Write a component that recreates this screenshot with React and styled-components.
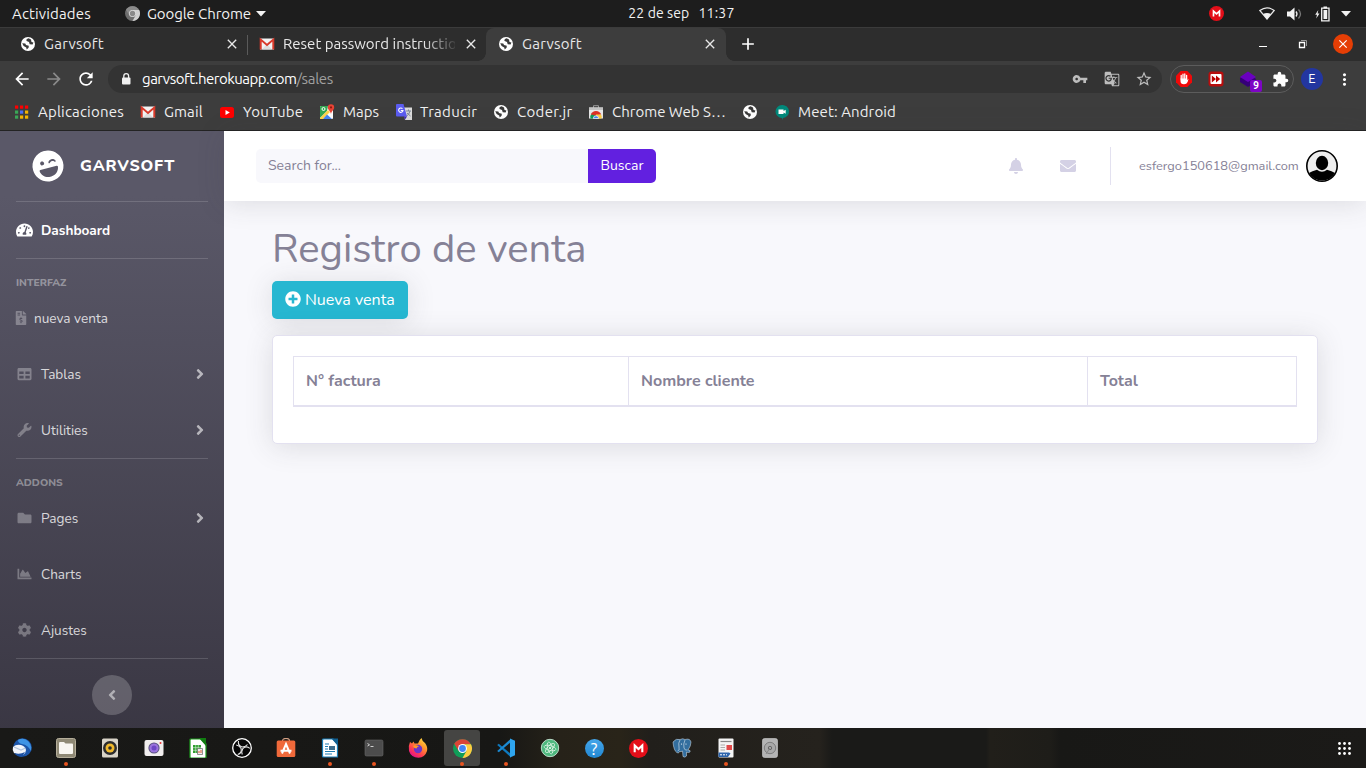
import React from 'react';
import styled, { createGlobalStyle, css } from 'styled-components';
import {
  FaLaughWink, FaTachometerAlt, FaFileInvoiceDollar, FaTable, FaWrench, FaFolder, FaChartArea,
  FaCog, FaAngleRight, FaAngleLeft, FaBell, FaEnvelope, FaPlusCircle,
} from 'react-icons/fa';
import {
  MdArrowBack, MdArrowForward, MdRefresh, MdVpnKey, MdGTranslate, MdStarBorder,
  MdExtension, MdMoreVert, MdAdd, MdClose,
} from 'react-icons/md';

const Global = createGlobalStyle`
  *, *::before, *::after { box-sizing: border-box; }
  body { margin: 0; background: #1d1d1d; overflow: hidden; }
  svg { display: block; flex-shrink: 0; }
`;

const systemFont = "Ubuntu, 'Noto Sans', sans-serif";
const pageFont = "Nunito, Lato, 'Noto Sans', sans-serif";

const Desktop = styled.div`
  width: 1366px;
  height: 768px;
  display: flex;
  flex-direction: column;
  font-family: ${systemFont};
  overflow: hidden;
`;

const Label = styled.span`
  letter-spacing: ${(p) => p.$track || 0}px;
  white-space: pre;
`;

/* ---------- system bar ---------- */

const SystemBar = styled.header`
  height: 27px;
  flex: none;
  display: grid;
  grid-template-columns: 1fr auto 1fr;
  align-items: center;
  padding: 0 15px 0 12px;
  background: #1d1d1d;
  color: #f2f2f2;
  font-size: 15px;
  line-height: 26px;
`;

const SystemLeft = styled.div`
  display: flex;
  align-items: center;
  svg:first-of-type { margin: 0 7px 0 34px; }
  svg:last-of-type { margin-left: 5px; }
`;

const Clock = styled.div`
  display: flex;
  gap: 9px;
  margin-top: -2px;
  font-size: 14px;
`;

const Tray = styled.div`
  display: flex;
  align-items: center;
  justify-content: flex-end;
  svg:first-child { margin-right: 35px; }
  svg:nth-child(2) { margin-right: 12px; }
  svg:nth-child(3) { margin-right: 13px; }
  svg:nth-child(4) { margin-right: 11px; }
`;

/* ---------- browser ---------- */

const TabStrip = styled.div`
  height: 34px;
  flex: none;
  display: flex;
  align-items: stretch;
  padding-left: 8px;
  background: #2d2d2d;
  border-top: 1px solid #3b3b3b;
  color: #e8e8e8;
  font-size: 15px;
`;

const Tab = styled.div`
  width: ${(p) => p.$width}px;
  display: flex;
  align-items: center;
  gap: 8px;
  padding: 0 7px 1px 12px;
  position: relative;
  ${(p) => p.$divided && css`
    background: linear-gradient(#5a5a5a, #5a5a5a) 0 7px / 1px 20px no-repeat;
  `}
  ${(p) => p.$active && css`
    padding-right: 8px;
    background: #3d3d3d;
    border-radius: 8px 8px 0 0;
    &::before, &::after {
      content: '';
      position: absolute;
      bottom: 0;
      width: 8px;
      height: 8px;
    }
    &::before { left: -8px; background: radial-gradient(circle at 0 0, transparent 7.5px, #3d3d3d 8px); }
    &::after { right: -8px; background: radial-gradient(circle at 100% 0, transparent 7.5px, #3d3d3d 8px); }
  `}
`;

const TabTitle = styled(Label)`
  flex: 1;
  min-width: 0;
  line-height: 22px;
  ${(p) => p.$fade && css`
    mask-image: linear-gradient(90deg, #000 82%, transparent 102%);
  `}
`;

const NewTab = styled.div`
  width: 44px;
  display: flex;
  align-items: center;
  justify-content: center;
  padding-bottom: 1px;
  color: #fff;
`;

const WindowControls = styled.div`
  margin-left: auto;
  display: flex;
  align-items: center;
  padding: 0 13px 1px 0;
  gap: 30px;
`;

const CloseWindow = styled.div`
  width: 20px;
  height: 20px;
  border-radius: 50%;
  background: #e53e05;
  color: #fff;
  display: grid;
  place-items: center;
  margin-left: -5px;
`;

const Toolbar = styled.div`
  height: 36px;
  flex: none;
  display: flex;
  align-items: center;
  padding-left: 6px;
  background: #3d3d3d;
  color: #fff;
`;

const IconSlot = styled.div`
  width: 32px;
  flex: none;
  display: flex;
  align-items: center;
  justify-content: center;
  color: ${(p) => p.$color || 'inherit'};
`;

const Omnibox = styled.div`
  width: 1054px;
  height: 28px;
  margin: 0 8px 0 6px;
  padding: 0 2px 0 10px;
  border-radius: 14px;
  background: #333;
  display: flex;
  align-items: center;
  font-size: 15px;
  color: #bdbdbd;
`;

const Url = styled.div`
  flex: 1;
  padding-left: 8px;
  line-height: 26px;
  color: #a0a0a0;
`;

const Host = styled(Label)`
  color: #fff;
`;

const Extensions = styled.div`
  width: 124px;
  height: 28px;
  border: 1px solid #5c5c5c;
  border-radius: 14px;
  display: flex;
  align-items: center;
  justify-content: center;
  margin-right: 2px;
`;

const BadgeHost = styled(IconSlot)`
  position: relative;
`;

const Badge = styled.span`
  position: absolute;
  left: 18px;
  top: 9px;
  width: 12px;
  height: 12px;
  border-radius: 2px;
  background: #7d05c4;
  color: #fff;
  font: bold 10px/12px ${systemFont};
  text-align: center;
`;

const Profile = styled.div`
  width: 22px;
  height: 22px;
  border-radius: 50%;
  background: #2336a0;
  color: #fff;
  font-size: 13px;
  line-height: 21px;
  text-align: center;
`;

const Bookmarks = styled.nav`
  height: 34px;
  flex: none;
  display: flex;
  align-items: center;
  padding: 0 14px 4px;
  background: #3d3d3d;
  border-bottom: 1px solid #232323;
  color: #f0f0f0;
  font-size: 15px;
  line-height: 22px;
`;

const Bookmark = styled.div`
  width: ${(p) => p.$width}px;
  display: flex;
  align-items: center;
  gap: 8px;
`;

/* ---------- page ---------- */

const Page = styled.div`
  flex: 1;
  min-height: 0;
  display: flex;
  background: #f8f8fc;
  font-family: ${pageFont};
  color: #858196;
`;

const Sidebar = styled.aside`
  width: 224px;
  flex: none;
  padding: 0 16px;
  background: linear-gradient(180deg, #5a5868 10%, #373440 100%);
  background-size: 100% 650px;
`;

const Brand = styled.div`
  height: 70px;
  display: flex;
  align-items: center;
  padding: 0 0 1px 16px;
  gap: 16px;
  color: #fff;
  font-size: 16px;
  font-weight: 800;
  svg { transform: rotate(-15deg); }
`;

const Divider = styled.hr`
  height: 1px;
  margin: 0;
  border: 0;
  background: rgba(255, 255, 255, 0.15);
`;

const Heading = styled.div`
  height: 31px;
  padding-top: 16px;
  color: rgba(255, 255, 255, 0.4);
  font-size: 10.4px;
  line-height: 16px;
  font-weight: 800;
`;

const NavItem = styled.div`
  height: 56px;
  display: flex;
  align-items: center;
  color: ${(p) => (p.$active ? '#fff' : 'rgba(255,255,255,.8)')};
  font-size: 13.6px;
  font-weight: ${(p) => (p.$active ? 700 : 400)};
  > svg:first-child {
    color: ${(p) => (p.$active ? '#fff' : 'rgba(255,255,255,.3)')};
    margin-right: ${(p) => (p.$tight ? 6 : 8)}px;
    width: ${(p) => (p.$tight ? 14 : 17)}px;
    margin-left: ${(p) => (p.$tight ? -2 : 0)}px;
  }
`;

const Caret = styled(FaAngleRight)`
  margin-left: auto;
  color: rgba(255, 255, 255, 0.6);
`;

const Collapse = styled.button`
  width: 40px;
  height: 40px;
  margin: 16px auto 0;
  border: 0;
  padding: 0;
  border-radius: 50%;
  background: rgba(255, 255, 255, 0.2);
  color: rgba(255, 255, 255, 0.5);
  display: flex;
  align-items: center;
  justify-content: center;
`;

const Main = styled.main`
  flex: 1;
  min-width: 0;
`;

const shadow = '0 2.4px 28px rgba(58, 59, 69, 0.15)';

const Topbar = styled.div`
  height: 70px;
  display: flex;
  align-items: center;
  padding: 0 28px 0 32px;
  background: #fff;
  box-shadow: ${shadow};
`;

const Search = styled.div`
  display: flex;
  margin-bottom: 1px;
  height: 34px;
  border-radius: 5px;
  overflow: hidden;
  line-height: 33px;
  font-size: 14px;
`;

const SearchField = styled.div`
  width: 332px;
  padding-left: 12px;
  background: #f8f8fc;
`;

const SearchButton = styled.div`
  width: 68px;
  background: #6220e0;
  color: #fff;
  text-align: center;
`;

const Alerts = styled.div`
  margin-left: auto;
  display: flex;
  align-items: center;
  gap: 36px;
  color: #d4d1e5;
`;

const Account = styled.div`
  height: 38px;
  width: 228px;
  margin-left: 34px;
  padding-left: 28px;
  border-left: 1px solid #e3e1f0;
  display: flex;
  align-items: center;
  justify-content: space-between;
  font-size: 12.8px;
`;

const Content = styled.section`
  padding: 24px 48px;
`;

const Title = styled.h1`
  margin: 0 0 8px;
  font-size: 40px;
  font-weight: 400;
  line-height: 48px;
`;

const NewSale = styled.button`
  display: flex;
  align-items: center;
  gap: 4px;
  width: 136px;
  height: 38px;
  padding: 0 0 0 13px;
  border: 0;
  border-radius: 5px;
  background: #27b7d1;
  color: #fff;
  font: 400 16px/24px ${pageFont};
  box-shadow: ${shadow};
  svg { margin-top: -2px; }
`;

const Card = styled.div`
  height: 109px;
  margin-top: 16px;
  padding: 20px;
  border: 1px solid #e3e1f0;
  border-radius: 5px;
  background: #fff;
  box-shadow: ${shadow};
`;

const Table = styled.div`
  display: grid;
  grid-template-columns: 334px 459px 1fr;
  border: 1px solid #e3e1f0;
  border-bottom-width: 2px;
  height: 51px;
`;

const HeaderCell = styled.div`
  padding-left: 12px;
  font-size: 16px;
  font-weight: 700;
  line-height: 48px;
  & + & { border-left: 1px solid #e3e1f0; }
`;

/* ---------- dock ---------- */

const Dock = styled.footer`
  height: 40px;
  flex: none;
  display: flex;
  align-items: center;
  padding: 0 8px 0 0;
  background: linear-gradient(90deg, #191917 0, #171715 500px, #262219 560px, #292419 620px, #211f1b 650px, #25221d 820px, #1a1a18 832px, #1a1a18 986px, #211f1a 990px, #1e1d19 1050px, #181816 1060px, #1b1a18 1366px);
`;

const DockSlot = styled.div`
  width: 44px;
  height: 40px;
  padding: 2px 4px;
`;

const DockItem = styled.div`
  height: 36px;
  border-radius: 3px;
  display: flex;
  align-items: center;
  justify-content: center;
  position: relative;
  background: ${(p) => (p.$focused ? '#454543' : 'transparent')};
  &::after {
    content: '';
    display: ${(p) => (p.$running ? 'block' : 'none')};
    position: absolute;
    bottom: 0;
    width: 4px;
    height: 4px;
    border-radius: 50%;
    background: #e95420;
  }
`;

const AppGrid = styled.div`
  margin-left: auto;
  width: 28px;
  display: flex;
  justify-content: center;
`;

/* ---------- drawings ---------- */

const Chrome = ({ size = 18, grey }) => {
  const [r, y, g, b] = grey ? ['#8b8b8b', '#d0d0d0', '#6e6e6e', '#8a8a8a'] : ['#db4437', '#ffcd40', '#0f9d58', '#4285f4'];
  return (
    <svg width={size} height={size} viewBox="0 0 24 24">
      <circle cx="12" cy="12" r="12" fill={g} />
      <path d="M12 12L1.6 6A12 12 0 0 1 22.4 6.5H12z" fill={r} />
      <path d="M12 6.5H22.7A12 12 0 0 1 12 24L17 15z" fill={y} />
      <path d="M1.6 6L7 15L12 6z" fill={r} />
      <circle cx="12" cy="12" r="5.6" fill={grey ? '#ddd' : '#fff'} />
      <circle cx="12" cy="12" r="4.3" fill={b} />
    </svg>
  );
};

const Globe = () => (
  <svg width="16" height="16" viewBox="0 0 16 16">
    <circle cx="8" cy="8" r="7" fill="#fff" />
    <path d="M8.6 2.3Q5.7 3 6.6 5L9 6.1L9.7 8.2L12.6 8.6L13.4 6.4L11.5 6L11 3.4z" fill="#3a3a3a" />
    <path d="M2.2 7.2L5.3 7.6L6 9L8.8 9.8L8.6 11.8L6.7 13.4L6.2 11.4L3.6 10.1z" fill="#3a3a3a" />
  </svg>
);

const Lock = () => (
  <svg width="16" height="16" viewBox="0 0 16 16">
    <rect x="4" y="6.5" width="8.500" height="7" rx="1" fill="#f0f0f0" />
    <path d="M5.800 7V5Q5.800 2.700 8.200 2.700Q10.600 2.700 10.600 5V7" fill="none" stroke="#f0f0f0" strokeWidth="1.300" />
  </svg>
);

const Mega = ({ size }) => (
  <svg width={size} height={size} viewBox="0 0 20 20">
    <circle cx="10" cy="10" r="10" fill="#e30e19" />
    <path d="M6 14V6.8L10 10.6L14 6.8V14" fill="none" stroke="#fff" strokeWidth="2.2" />
  </svg>
);

const Down = () => <svg width="10" height="6" viewBox="0 0 10 6"><path d="M0 0H10L5 5.5z" fill="#f2f2f2" /></svg>;

const Wifi = () => (
  <svg width="16" height="14" viewBox="0 0 16 14">
    <path d="M.8 3.5Q8-1.8 15.2 3.5L8 12z" fill="none" stroke="#e8e8e8" strokeWidth="1.2" />
    <path d="M4 7Q8 5.2 12 7L8 12.6z" fill="#f2f2f2" />
  </svg>
);

const Volume = () => (
  <svg width="15" height="14" viewBox="0 0 15 14">
    <path d="M0 4.5H3L7.5.5V13.5L3 9.5H0z" fill="#f2f2f2" />
    <path d="M9 4.5Q11 7 9 9.5" fill="none" stroke="#eee" strokeWidth="1.3" />
    <path d="M11.5 2.5Q15.5 7 11.5 11.5" fill="none" stroke="#777" strokeWidth="1.3" />
  </svg>
);

const Battery = () => (
  <svg width="15" height="16" viewBox="0 0 15 16">
    <path d="M3.3 4L.2 8.7H2L1.2 12.5L4.5 7.5H2.6z" fill="#f2f2f2" />
    <path d="M6.7 2.200H14V14.800H6.700z" fill="none" stroke="#f2f2f2" strokeWidth="1.3" />
    <path d="M8.5 4H12.200V13H8.500zM8.500 .5H12V2.500H8.500z" fill="#f2f2f2" />
  </svg>
);

const GmailIcon = () => (
  <svg width="16" height="16" viewBox="0 0 16 16">
    <path d="M1 2.5H15V13.5H1z" fill="#f3f3f3" />
    <path d="M3 13.5L8 8L13 13.5z" fill="#ddd" />
    <path d="M1.7 13.5V3.6L8 9L14.3 3.6V13.5" fill="none" stroke="#d93a2b" strokeWidth="2" />
  </svg>
);

const GridColours = () => (
  <svg width="16" height="16" viewBox="0 0 16 16">
    {['#f00', '#f00', '#f00', '#3aa757', '#4c6ef5', '#f5b400', '#3aa757', '#f5b400', '#f5b400'].map((fill, i) => (
      <rect key={i} x={1 + (i % 3) * 5} y={1.5 + Math.floor(i / 3) * 5} width="3.2" height="3.2" fill={fill} />
    ))}
  </svg>
);

const YouTube = () => (
  <svg width="16" height="16" viewBox="0 0 16 16">
    <rect x="1" y="3" width="14" height="11" rx="2.5" fill="#f00" />
    <path d="M6.5 6V11L10.8 8.5z" fill="#fff" />
  </svg>
);

const Maps = () => (
  <svg width="16" height="16" viewBox="0 0 16 16">
    <rect x="1" y="2" width="13" height="13" rx="1" fill="#fff" />
    <path d="M1 3Q1 2 2 2H9L8 7L1 14z" fill="#34a853" />
    <path d="M1 14L9 6L11 8L4 15H1z" fill="#ffd54a" />
    <path d="M4 15L8 10.5L13 15z" fill="#4285f4" />
    <circle cx="4.5" cy="5" r="1.5" fill="none" stroke="#fff" />
    <path d="M12 .3A3.2 3.2 0 0 1 15.2 3.5C15.2 6 12.5 7 12 10C11.5 7 8.8 6 8.8 3.5A3.2 3.2 0 0 1 12 .3z" fill="#ea4335" />
    <circle cx="12" cy="3.4" r="1.1" fill="#8e1d12" />
  </svg>
);

const Translate = () => (
  <svg width="16" height="16" viewBox="0 0 16 16">
    <path d="M7 3.5H16V16H9z" fill="#dcdcdc" />
    <path d="M10 7H15M12.5 5.5V7M14 7Q13 11 10.5 12M11 9L14.5 12" fill="none" stroke="#7b8796" />
    <path d="M0 1Q0 0 1 0H7.5L11 12.5H1Q0 12.5 0 11.5z" fill="#5b5cf0" />
    <path d="M8 12.5H11L9 15.7z" fill="#3b27b5" />
    <path d="M6.5 4.7A2.2 2.2 0 1 0 7 6.5H4.8" fill="none" stroke="#fff" strokeWidth="1.1" />
  </svg>
);

const WebStore = () => (
  <svg width="16" height="16" viewBox="0 0 16 16">
    <path d="M5.5 4V1.7H10.5V4" fill="none" stroke="#9a9a9a" />
    <path d="M1 3.5H15V14.5H1z" fill="#e8e8e8" />
    <path d="M1 3.5H15V6H1z" fill="#c4c4c4" />
    <path d="M2.5 14.5A5.8 5.8 0 0 1 4.2 9L8 11V14.5z" fill="#0f9d58" />
    <path d="M2.8 10.5A5.6 5.6 0 0 1 13.200 10.5L8 11.500z" fill="#db3226" />
    <path d="M8 10.500H13A5 5 0 0 1 13.5 14.5H8z" fill="#ffcd40" />
    <path d="M5.3 14.5A2.7 2.7 0 0 1 10.7 14.5z" fill="#4285f4" stroke="#fff" strokeWidth=".7" />
  </svg>
);

const Meet = () => (
  <svg width="16" height="16" viewBox="0 0 16 16">
    <path d="M8 1A6.5 6.5 0 0 1 9 14L8 16V14A6.5 6.5 0 0 1 8 1z" fill="#00897b" />
    <path d="M4.5 5.5H9.5V7L11.7 5.7V9.8L9.5 8.5V10H4.5z" fill="#fff" />
  </svg>
);

const StopHand = () => (
  <svg width="16" height="16" viewBox="0 0 16 16">
    <path d="M4.7 0H11.3L16 4.7V11.3L11.3 16H4.7L0 11.3V4.7z" fill="#f00909" />
    <path d="M5.2 8V4.5M7 8V3.2M8.8 8V3M10.6 8V4.3" stroke="#fff" strokeWidth="1.3" strokeLinecap="round" />
    <path d="M4.5 7.5H11.2V9L12.6 7.8L11.600 11Q10.700 13.3 8 13.3Q4.500 13.3 4.500 10z" fill="#fff" />
  </svg>
);

const FastForward = () => (
  <svg width="16" height="16" viewBox="0 0 16 16">
    <rect x=".5" y=".5" width="15" height="15" rx="3" fill="#b80d0d" />
    <rect x="2.5" y="3" width="11" height="10" rx="1" fill="#fff" />
    <path d="M3.8 4.5L8 8L3.8 11.5zM8 4.5L12.2 8L8 11.5z" fill="#b00" />
  </svg>
);

const Layers = () => (
  <svg width="16" height="16" viewBox="0 0 16 16">
    <path d="M0 7L8 3L16 8V11L8 16L0 11z" fill="#360079" />
    <path d="M0 6L8 .5L16 6L8 11z" fill="#6a00c0" />
  </svg>
);

const Avatar = () => (
  <svg width="32" height="32" viewBox="0 0 32 32">
    <circle cx="16" cy="16" r="15.2" fill="#eee" stroke="#000" strokeWidth="1.6" />
    <ellipse cx="16" cy="13" rx="6.2" ry="7.2" />
    <path d="M3 23Q6 21 11 19.8Q16 23.5 21 19.8Q26 21 29 23A15 15 0 0 1 3 23z" />
  </svg>
);

const Restore = () => (
  <svg width="10" height="10" viewBox="0 0 10 10" fill="none">
    <path d="M3 1.5H8.5V7" stroke="#999" />
    <path d="M1.5 3.5H6.5V8.5H1.5z" stroke="#fff" strokeWidth="1.3" />
  </svg>
);

const Minimise = () => <svg width="10" height="10" viewBox="0 0 10 10"><path d="M1 7H9V8H1z" fill="#fff" /></svg>;

const Art = ({ children }) => <svg width="20" height="20" viewBox="0 0 20 20">{children}</svg>;

const Thunderbird = () => (
  <Art>
    <circle cx="10.5" cy="9.5" r="9.3" fill="#1c55a8" />
    <path d="M6 2Q11-1 16 3Q20 7 19 13Q16 7 10 6Q6 5 6 2z" fill="#3f94e4" />
    <path d="M1 9Q4 6 9 7Q13 8 14 12Q14 15 11 17Q6 17 2 15Q0 12 1 9z" fill="#f2f5fa" />
    <path d="M2 9L9 12L13.500 10" fill="none" stroke="#b3c5dc" strokeWidth="1.2" />
    <path d="M2 15Q8 17 13 14L10 19Q5 19 2 15z" fill="#1b4fa0" />
  </Art>
);

const Files = () => (
  <Art>
    <rect x=".5" y=".5" width="19" height="19" rx="2" fill="#8f8975" stroke="#b5ae9a" />
    <path d="M3 5Q3 4 4 4H8L9.5 5.5H16Q17 5.5 17 6.5V15Q17 16 16 16H4Q3 16 3 15z" fill="#f8f6f1" />
  </Art>
);

const Rhythmbox = () => (
  <Art>
    <rect x="2" y=".5" width="16" height="19" rx="1.5" fill="#d9d4c8" />
    <circle cx="10" cy="10" r="7" fill="#2c2c2c" />
    <circle cx="10" cy="10" r="4.5" fill="#f0b92c" />
    <circle cx="10" cy="10" r="1.8" fill="#2c2c2c" />
  </Art>
);

const Camera = () => (
  <Art>
    <rect x=".5" y="2" width="19" height="16" rx="2" fill="#f1eeee" />
    <circle cx="10" cy="10" r="5.6" fill="#5a5380" />
    <circle cx="10" cy="10" r="4.6" fill="#9a73dd" />
    <circle cx="10" cy="10" r="2.5" fill="#6d46c4" />
    <circle cx="16.5" cy="5" r="1" fill="#e33" />
  </Art>
);

const Calc = () => (
  <Art>
    <path d="M3 1H13L18 6V19Q18 20 17 20H3Q2 20 2 19V2Q2 1 3 1z" fill="#fff" stroke="#1d9b1d" strokeWidth="1.2" />
    <path d="M11 0H18V8z" fill="#107c10" />
    <path d="M5 7H13V15H5z" fill="#2f9e2f" />
    <path d="M5 9.7H13M5 12.3H13M7.7 7V15M10.3 7V15" stroke="#d8f0d8" strokeWidth=".6" />
    <path d="M9.5 10.5H14.5V16.5H9.5z" fill="#eee" stroke="#666" strokeWidth=".7" />
    <path d="M11 15V13M13 15V12" stroke="#e0592a" />
  </Art>
);

const Obs = () => (
  <Art>
    <circle cx="10" cy="10" r="9.3" fill="#060606" stroke="#fff" strokeWidth="1.3" />
    <g fill="none" stroke="#e8e8e8" strokeWidth="1.1">
      <path d="M6.5 3Q5.500 7.500 10 9Q13.500 9 15.500 6.500" />
      <path d="M6.5 3Q5.500 7.500 10 9Q13.500 9 15.500 6.500" transform="rotate(120 10 10)" />
      <path d="M6.5 3Q5.500 7.500 10 9Q13.500 9 15.500 6.500" transform="rotate(240 10 10)" />
    </g>
  </Art>
);

const Software = () => (
  <Art>
    <path d="M6.5 3Q6.5 .5 10 .5Q13.5 .5 13.5 3" fill="none" stroke="#d5a184" strokeWidth="1.2" />
    <rect x=".7" y="2.5" width="18.6" height="16.5" rx="1.5" fill="#f0693a" />
    <path d="M6 15.5L10 6L14 15.5M4.5 12.7H15.5" fill="none" stroke="#fff" strokeWidth="2" />
  </Art>
);

const Writer = () => (
  <Art>
    <path d="M3.5 1H13L17.5 6V19H3.5Q2.5 19 2.5 18V2Q2.5 1 3.5 1z" fill="#fff" stroke="#1a7fb8" strokeWidth="1.2" />
    <path d="M11.5 .4H18V8z" fill="#0f5f91" />
    <path d="M5 6H9M5 8.5H8M5 11H8M5 13.5H15M5 16H12" stroke="#1d7db3" strokeWidth="1.2" />
    <path d="M9 8H15V12H9z" fill="#3d6d8d" />
  </Art>
);

const Terminal = () => (
  <Art>
    <rect x="1" y="2" width="18" height="16" rx="1.5" fill="#4c4c4c" stroke="#6a6a6a" strokeWidth=".6" />
    <path d="M3.500 5.500L5.500 6.800L3.500 8M6.500 8.500H9.500" fill="none" stroke="#ddd" strokeWidth=".9" />
  </Art>
);

const Firefox = () => (
  <Art>
    <defs>
      <linearGradient id="fox" x1="1" y1="0" x2=".3" y2="1">
        <stop offset="0" stopColor="#fff04a" />
        <stop offset=".4" stopColor="#ff9a2c" />
        <stop offset=".75" stopColor="#ff3b50" />
        <stop offset="1" stopColor="#e3108c" />
      </linearGradient>
    </defs>
    <path d="M2 4L4 5.5L5.5 3.5L6.5 5.5H10Q11 2 13.5 0Q14 3 17 5Q20 9 19 13Q17 19.5 10.5 19.7Q3 19.5 1 13Q0 8 2 4z" fill="url(#fox)" />
    <circle cx="10" cy="11" r="4.2" fill="#6a35c8" />
    <path d="M5 8Q8 6.5 11 8.5Q9 8.5 8.5 10.5Q6 10.5 5 8z" fill="#ff9b22" />
  </Art>
);

const Code = () => (
  <Art>
    <path d="M1.2 7L2.8 5.8L15 16V19.5z" fill="#0e7ac0" />
    <path d="M1.2 13L2.8 14.2L15 4V.7z" fill="#1b8ad3" />
    <path d="M14 .5L19 2.8V17.2L14 19.5z" fill="#2fa6f0" />
  </Art>
);

const AtomApp = () => (
  <Art>
    <circle cx="10" cy="10" r="8.7" fill="#4db87e" stroke="#b9dcc8" />
    <g fill="none" stroke="#def3e6" strokeWidth=".8">
      <ellipse cx="10" cy="10" rx="6" ry="2.4" transform="rotate(15 10 10)" />
      <ellipse cx="10" cy="10" rx="6" ry="2.4" transform="rotate(75 10 10)" />
      <ellipse cx="10" cy="10" rx="6" ry="2.4" transform="rotate(135 10 10)" />
    </g>
    <circle cx="10" cy="10" r="1" fill="#fff" />
  </Art>
);

const Help = styled.span`
  width: 19px;
  height: 19px;
  border-radius: 50%;
  background: linear-gradient(#45a6ea, #2187d2);
  color: #fff;
  font-size: 17px;
  line-height: 19px;
  text-align: center;
`;

const Elephant = () => (
  <Art>
    <path d="M1 4Q4 0 8 1.5Q11 0 13 1.5Q18 0 19 4Q19 8 16 12Q19 12 18 14Q16 15 14.5 14V18Q13 20 11 18.5L10.5 13Q9 14 7.5 13.5L6.5 15Q3 15 1.5 8z" fill="#336e9e" stroke="#dbe7f0" strokeWidth=".5" />
    <path d="M8 2Q6 5 7 9Q8 13 5.5 13M13 2Q11 6 12 10Q13 13 15.5 12" fill="none" stroke="#dbe7f0" strokeWidth=".6" />
    <circle cx="9.5" cy="6" r=".6" fill="#fff" />
    <circle cx="14" cy="6" r=".6" fill="#fff" />
  </Art>
);

const Reader = () => (
  <Art>
    <rect x="2.5" y=".5" width="15" height="19" rx="1" fill="#f4f4f4" />
    <path d="M4.5 3.5H15.5" stroke="#888" strokeWidth="1.2" />
    <path d="M4.5 7H9M4.5 9.5H9M4.5 12H9" stroke="#999" strokeWidth=".8" />
    <path d="M10.5 7H16V12H10.500z" fill="#e04848" />
    <path d="M2.5 14.5H13L14.500 15.5L12 19H2.5z" fill="#2e65ac" />
    <path d="M4 16.8H11" stroke="#fff" strokeDasharray="2 1" />
  </Art>
);

const Disk = () => (
  <Art>
    <rect x="2.5" y=".5" width="15" height="19" rx="2" fill="#b4b4b4" stroke="#d0d0d0" strokeWidth=".6" />
    <circle cx="10" cy="10" r="5.7" fill="#a9a9a9" stroke="#777" strokeWidth=".9" />
    <circle cx="10" cy="10" r="1.7" fill="none" stroke="#666" />
    <path d="M10 10L6 16" stroke="#888" />
  </Art>
);

const Dots = () => (
  <svg width="13" height="13" viewBox="0 0 13 13" fill="#fff">
    {[0, 1, 2, 3, 4, 5, 6, 7, 8].map((i) => (
      <circle key={i} cx={1.5 + (i % 3) * 5} cy={1.5 + Math.floor(i / 3) * 5} r="1.4" />
    ))}
  </svg>
);

const bookmarks = [
  { icon: <GridColours />, name: 'Aplicaciones', width: 126, track: 0.2 },
  { icon: <GmailIcon />, name: 'Gmail', width: 79, track: 0.1 },
  { icon: <YouTube />, name: 'YouTube', width: 100, track: 0.2 },
  { icon: <Maps />, name: 'Maps', width: 77, track: 0 },
  { icon: <Translate />, name: 'Traducir', width: 97, track: 0.3 },
  { icon: <Globe />, name: 'Coder.jr', width: 95, track: 0.3 },
  { icon: <WebStore />, name: 'Chrome Web S…', width: 154, track: 0 },
  { icon: <Globe />, width: 32 },
  { icon: <Meet />, name: 'Meet: Android', width: 130, track: 0.1 },
];

const dock = [
  { icon: <Thunderbird /> }, { icon: <Files />, running: true }, { icon: <Rhythmbox /> }, { icon: <Camera /> },
  { icon: <Calc /> }, { icon: <Obs /> }, { icon: <Software /> }, { icon: <Writer />, running: true },
  { icon: <Terminal />, running: true }, { icon: <Firefox /> }, { icon: <Chrome size={19} />, running: true, focused: true },
  { icon: <Code />, running: true }, { icon: <AtomApp /> }, { icon: <Help>?</Help> },
  { icon: <Mega size={19} /> }, { icon: <Elephant /> }, { icon: <Reader />, running: true }, { icon: <Disk /> },
];

const Entry = ({ icon: Icon, size = 14, name, caret, active, tight }) => (
  <NavItem $active={active} $tight={tight}>
    <Icon size={size} />
    <Label>{name}</Label>
    {caret && <Caret size={16} />}
  </NavItem>
);

export default function App() {
  return (
    <Desktop>
      <Global />
      <SystemBar>
        <SystemLeft>
          <Label $track={0.15}>Actividades</Label>
          <Chrome size={15} grey />
          <Label $track={-0.08}>Google Chrome</Label>
          <Down />
        </SystemLeft>
        <Clock>
          <Label $track={0.1}>22 de sep</Label>
          <Label $track={0.25}>11:37</Label>
        </Clock>
        <Tray><Mega size={15} /><Wifi /><Volume /><Battery /><Down /></Tray>
      </SystemBar>

      <TabStrip>
        <Tab $width={239}>
          <Globe />
          <TabTitle $track={0.25}>Garvsoft</TabTitle>
          <MdClose size={16} />
        </Tab>
        <Tab $width={239} $divided>
          <GmailIcon />
          <TabTitle $fade>Reset password instructio</TabTitle>
          <MdClose size={16} />
        </Tab>
        <Tab $width={240} $active>
          <Globe />
          <TabTitle $track={0.25}>Garvsoft</TabTitle>
          <MdClose size={16} />
        </Tab>
        <NewTab><MdAdd size={20} /></NewTab>
        <WindowControls>
          <Minimise />
          <Restore />
          <CloseWindow><MdClose size={14} /></CloseWindow>
        </WindowControls>
      </TabStrip>

      <Toolbar>
        <IconSlot><MdArrowBack size={20} /></IconSlot>
        <IconSlot $color="#8a8a8a"><MdArrowForward size={20} /></IconSlot>
        <IconSlot><MdRefresh size={20} /></IconSlot>
        <Omnibox>
          <Lock />
          <Url>
            <Host $track={-0.5}>garvsoft.herokuapp.com</Host>
            <Label $track={-0.3}>/sales</Label>
          </Url>
          <IconSlot><MdVpnKey size={16} /></IconSlot>
          <IconSlot><MdGTranslate size={16} /></IconSlot>
          <IconSlot><MdStarBorder size={18} /></IconSlot>
        </Omnibox>
        <Extensions>
          <IconSlot><StopHand /></IconSlot>
          <IconSlot><FastForward /></IconSlot>
          <BadgeHost><Layers /><Badge>9</Badge></BadgeHost>
          <IconSlot><MdExtension size={17} /></IconSlot>
        </Extensions>
        <IconSlot><Profile>E</Profile></IconSlot>
        <IconSlot><MdMoreVert size={19} /></IconSlot>
      </Toolbar>

      <Bookmarks>
        {bookmarks.map((b, i) => (
          <Bookmark key={i} $width={b.width}>
            {b.icon}
            {b.name && <Label $track={b.track}>{b.name}</Label>}
          </Bookmark>
        ))}
      </Bookmarks>

      <Page>
        <Sidebar>
          <Brand>
            <FaLaughWink size={32} />
            <Label $track={0.8}>GARVSOFT</Label>
          </Brand>
          <Divider />
          <Entry icon={FaTachometerAlt} size={16} name="Dashboard" active />
          <Divider />
          <Heading>INTERFAZ</Heading>
          <Entry icon={FaFileInvoiceDollar} name="nueva venta" tight />
          <Entry icon={FaTable} name="Tablas" caret />
          <Entry icon={FaWrench} name="Utilities" caret />
          <Divider />
          <Heading>ADDONS</Heading>
          <Entry icon={FaFolder} name="Pages" caret />
          <Entry icon={FaChartArea} name="Charts" />
          <Entry icon={FaCog} name="Ajustes" />
          <Divider />
          <Collapse><FaAngleLeft size={16} /></Collapse>
        </Sidebar>

        <Main>
          <Topbar>
            <Search>
              <SearchField>Search for...</SearchField>
              <SearchButton>Buscar</SearchButton>
            </Search>
            <Alerts><FaBell size={16} /><FaEnvelope size={16} /></Alerts>
            <Account>
              <Label>esfergo150618@gmail.com</Label>
              <Avatar />
            </Account>
          </Topbar>
          <Content>
            <Title>Registro de venta</Title>
            <NewSale><FaPlusCircle size={16} /><Label>Nueva venta</Label></NewSale>
            <Card>
              <Table>
                <HeaderCell>N° factura</HeaderCell>
                <HeaderCell>Nombre cliente</HeaderCell>
                <HeaderCell>Total</HeaderCell>
              </Table>
            </Card>
          </Content>
        </Main>
      </Page>

      <Dock>
        {dock.map((d, i) => (
          <DockSlot key={i}>
            <DockItem $running={d.running} $focused={d.focused}>{d.icon}</DockItem>
          </DockSlot>
        ))}
        <AppGrid><Dots /></AppGrid>
      </Dock>
    </Desktop>
  );
}
